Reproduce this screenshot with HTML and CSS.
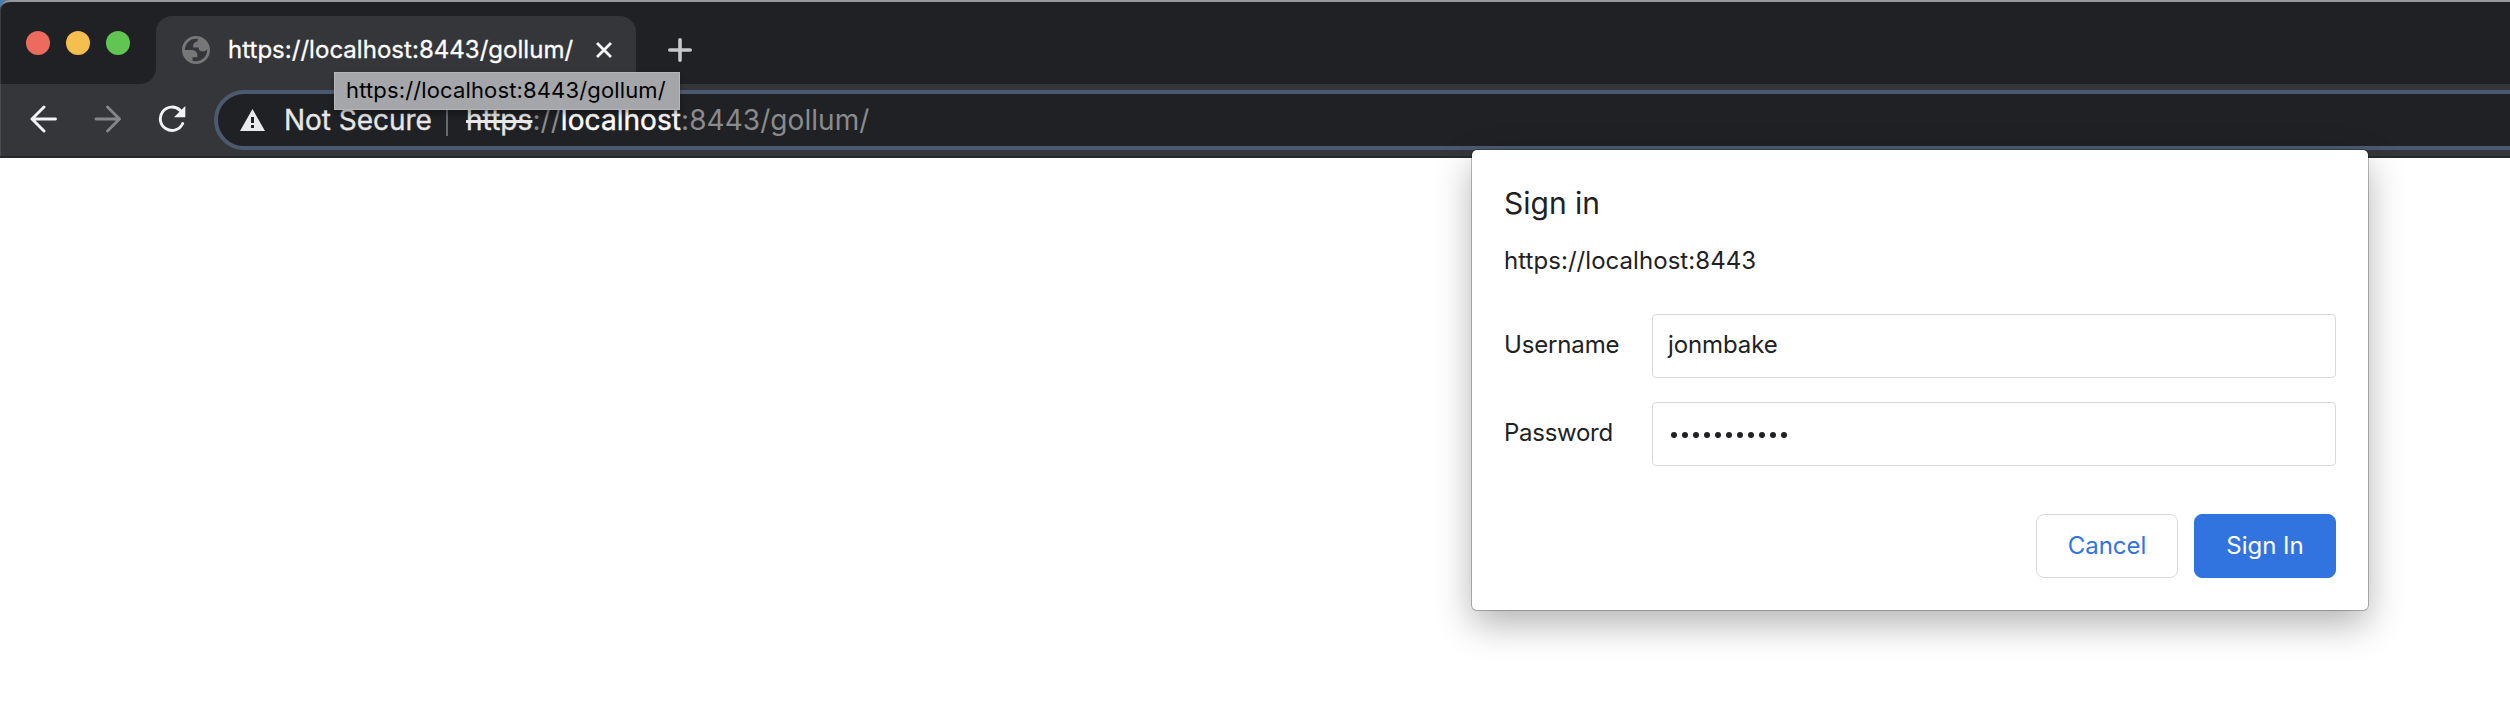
FILE: index.html
```
<!DOCTYPE html>
<html lang="en">
<head>
<meta charset="utf-8">
<title>https://localhost:8443/gollum/</title>
<link rel="stylesheet" href="styles.css">
</head>
<body>
<div class="window">
  <header class="tabstrip">
    <div class="lights"><i class="light red"></i><i class="light yellow"></i><i class="light green"></i></div>
    <div class="tab">
      <svg class="globe" viewBox="2 2 20 20"><path fill="#777778" fill-rule="evenodd" d="M12 2C6.480 2 2 6.480 2 12s4.480 10 10 10 10-4.480 10-10S17.520 2 12 2zM4 12h4.400c3.407.022 4.922 1.730 4.543 5.127H9.488v2.470a8.004 8.004 0 0 0 10.498-8.083C19.327 12.504 18.332 13 17 13c-2.137 0-3.206-.916-3.206-2.750h-3.748c-.274-2.728.683-4.092 2.870-4.092 0-.975.327-1.597.811-1.970A8.004 8.004 0 0 0 4 12z"/></svg>
      <span class="tab-title">https://localhost:8443/gollum/</span>
      <svg class="close" viewBox="0 0 18 18"><path d="M2 2l14 14M16 2L2 16"/></svg>
    </div>
    <svg class="plus" viewBox="0 0 24 24"><path d="M12 1.800v20.400M1.800 12h20.400"/></svg>
  </header>
  <div class="toolbar">
    <svg class="nav" viewBox="0 0 28 28"><path d="M25.500 14H2M14 2L2 14l12 12"/></svg>
    <svg class="nav dim" viewBox="0 0 28 28"><path d="M2 14h23.500M13.500 2l12 12-12 12"/></svg>
    <svg class="nav reload" viewBox="0 0 28 28"><path d="M22.200 5.400A11.700 11.700 0 1 0 24.700 18.500"/><path class="solid" d="M27.300 1v11.200H16z"/></svg>
    <div class="omnibox">
      <svg class="warning" viewBox="0 0 25 22"><path fill="#e8eaed" fill-rule="evenodd" d="M12.500 0L25 22H0zM11 8v6h3V8zM11 16v3h3v-3z"/></svg>
      <span class="secure">Not Secure</span>
      <i class="divider"></i>
      <span class="scheme">https</span><span class="slashes">://</span><span class="host">localhost</span><span class="path">:8443/gollum/</span>
    </div>
  </div>
  <div class="tooltip">https://localhost:8443/gollum/</div>
  <form class="dialog">
    <h1 class="title">Sign in</h1>
    <p class="origin">https://localhost:8443</p>
    <div class="row"><span class="label">Username</span><div class="field"><span class="user">jonmbake</span></div></div>
    <div class="row"><span class="label pw">Password</span><div class="field dots"><i></i><i></i><i></i><i></i><i></i><i></i><i></i><i></i><i></i><i></i><i></i></div></div>
    <div class="actions"><button type="button" class="btn">Cancel</button><button type="button" class="btn primary">Sign In</button></div>
  </form>
</div>
</body>
</html>
```
FILE: styles.css
```
* { box-sizing: border-box; }
body { margin: 0; background: #fff; overflow: hidden; font-family: Inter, "Liberation Sans", sans-serif; white-space: nowrap; }
.window { position: relative; height: 724px; overflow: hidden; }
.tabstrip { height: 84px; display: flex; background: #202124; border-top: 2px solid #96999b; border-top-left-radius: 10px; box-shadow: inset 1px 0 #3c3d40; }
.window::before { content: ""; position: absolute; z-index: -1; width: 12px; height: 12px; background: #4d7ca8; }
.lights { width: 156px; padding: 29px 0 0 26px; display: flex; gap: 16px; }
.light { width: 24px; height: 24px; border-radius: 50%; }
.red { background: #ed6a5e; }
.yellow { background: #f5bf4f; }
.green { background: #61c554; }
.tab { position: relative; width: 480px; height: 68px; margin-top: 14px; padding: 0 23px 0 26px; display: flex; align-items: flex-start; background: #35363a; border-radius: 16px 16px 0 0; color: #fff; }
.tab::before { content: ""; position: absolute; left: -16px; bottom: 0; width: 16px; height: 16px; background: radial-gradient(circle at 0 0, #202124 15.500px, #35363a 16.500px); }
.globe { width: 28px; height: 28px; margin-top: 20px; }
.tab-title { width: 366px; margin: 18px 0 0 18px; font-size: 24px; line-height: 31px; letter-spacing: 0.030px; -webkit-text-stroke: 0.300px #fff; }
.close { flex: none; width: 18px; height: 18px; margin: 25px 0 0 auto; fill: none; stroke: #f4f4f4; stroke-width: 2.800; }
.plus { width: 24px; height: 24px; margin: 36px 0 0 32px; fill: none; stroke: #c6c8cb; stroke-width: 3.600; stroke-linecap: round; }
.toolbar { height: 74px; display: flex; padding: 6px 0 0 30px; background: #35363a; border-bottom: 2px solid #28292b; box-shadow: inset 1px 0 #4a4b4e; }
.nav { flex: none; width: 28px; height: 28px; margin: 15px 36px 0 0; fill: none; stroke: #f1f3f4; stroke-width: 2.900; stroke-linecap: round; stroke-linejoin: round; }
.dim { stroke: #868688; }
.reload { margin-right: 28px; }
.reload .solid { fill: #f1f3f4; stroke: none; }
.omnibox { flex: 1; height: 60px; margin-right: -40px; padding: 8px 0 0 22px; display: flex; align-items: flex-start; background: #202124; border: 4px solid #4c5a70; border-radius: 30px; font-size: 28px; line-height: 36px; letter-spacing: 0.060px; color: #e8e8e8; }
.warning { flex: none; width: 25px; height: 22px; margin: 7px 19px 0 0; }
.secure { width: 162px; letter-spacing: -0.040px; -webkit-text-stroke: 0.300px #e8e8e8; }
.divider { width: 2px; height: 26px; margin: 8px 18px 0 0; background: #68696b; }
.scheme { text-decoration: line-through; text-decoration-thickness: 3px; -webkit-text-stroke: 0.300px #e8e8e8; }
.slashes, .path { color: #8a8b8d; }
.host { color: #fff; -webkit-text-stroke: 0.400px #fff; }
.tooltip { position: absolute; left: 334px; top: 72px; width: 346px; height: 38px; padding-left: 11px; border: 1px solid #b6b6b9; background: #a5a6aa; color: #000; font-size: 22px; line-height: 35px; letter-spacing: 0.140px; box-shadow: 0 4px 6px rgba(0,0,0,.3); }
.dialog { position: absolute; left: 1472px; top: 150px; width: 896px; height: 460px; padding: 32px; background: #fff; border-radius: 5px; color: #202124; font-size: 24px; box-shadow: 0 0 0 1px rgba(0,0,0,.25), 0 14px 36px rgba(0,0,0,.3); }
.title { margin: 0; font-size: 30px; font-weight: 400; line-height: 42px; }
.origin { margin: 21px 0 37px; line-height: 32px; letter-spacing: 0.050px; }
.row { display: flex; height: 64px; margin-bottom: 24px; line-height: 62px; }
.label { width: 148px; letter-spacing: -0.160px; }
.pw { letter-spacing: -0.280px; }
.field { width: 684px; padding-left: 15px; border: 1px solid #d8d9dc; border-radius: 4px; line-height: 60px; }
.user { letter-spacing: -0.100px; }
.dots { display: flex; align-items: center; gap: 5px; padding: 1px 0 0 18px; }
.dots i { width: 6px; height: 6px; border-radius: 50%; background: #202124; }
.actions { display: flex; justify-content: flex-end; gap: 16px; margin-top: 48px; }
.btn { width: 142px; height: 64px; padding: 0 0 1px; background: #fff; border: 1px solid #d8dadd; border-radius: 8px; color: #3174e0; font: 24px/61px Inter, sans-serif; }
.primary { background: #3174e0; border-color: #3174e0; color: #fff; }
```
